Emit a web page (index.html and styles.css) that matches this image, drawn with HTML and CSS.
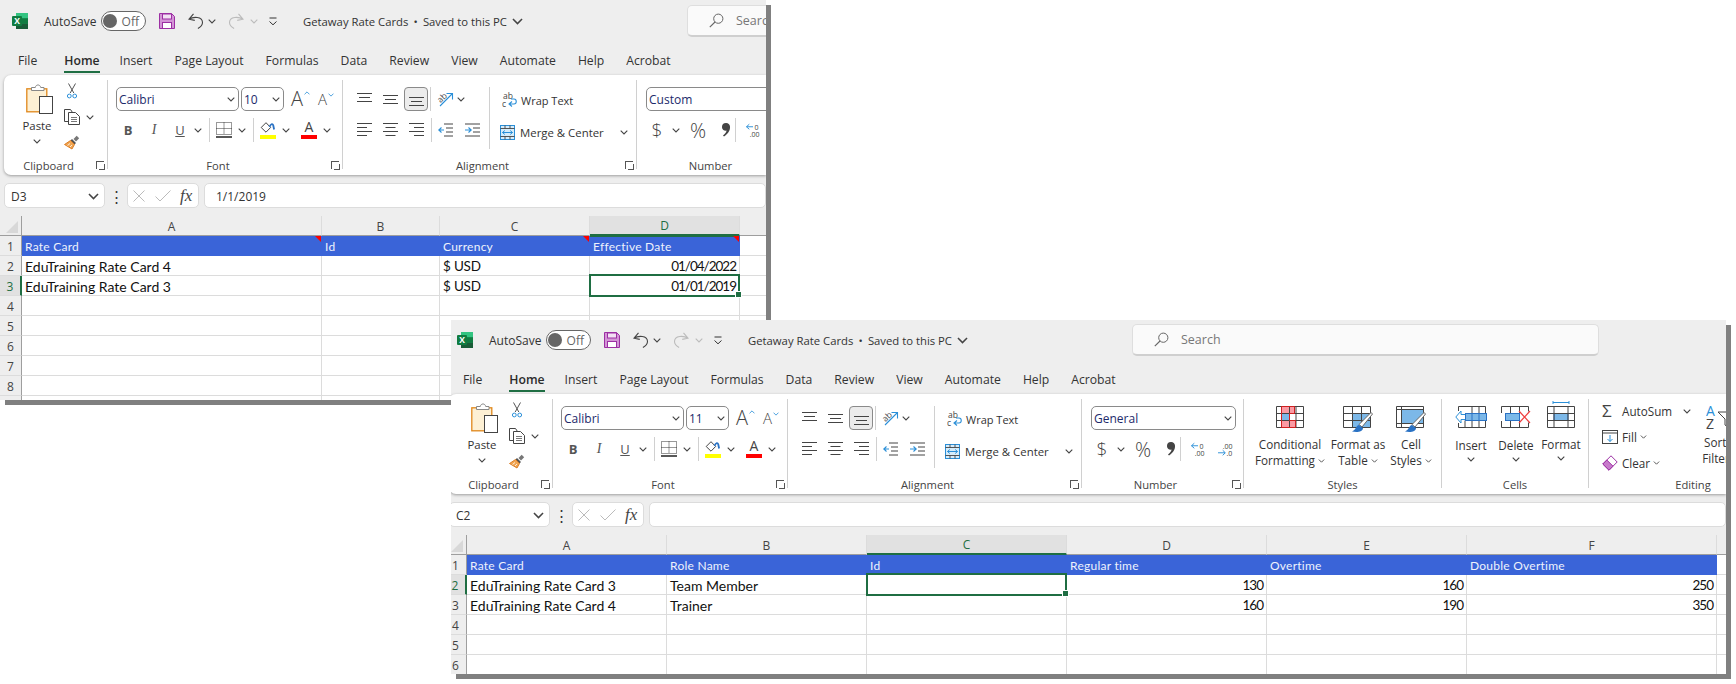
FILE: index.html
```html
<!DOCTYPE html>
<html lang="en">
<head>
  <meta charset="UTF-8" />
  <title>Getaway Rate Cards</title>
  <link rel="stylesheet" href="styles.css">
</head>
<body>

<!-- shared icons -->
<svg class="defs" aria-hidden="true">
  <symbol id="i-logo" viewBox="0 0 16 16">
    <path d="M4 0h11a1 1 0 0 1 1 1v14a1 1 0 0 1-1 1H4z" fill="#21a366"/>
    <rect x="4" y="0" width="12" height="5.3" fill="#33c481"/>
    <rect x="10" y="5.3" width="6" height="5.4" fill="#107c41"/>
    <rect x="4" y="10.7" width="12" height="5.3" fill="#185c37"/>
    <rect x="0" y="3" width="10" height="10" rx="1" fill="#107c41"/>
    <text x="5" y="11" text-anchor="middle" fill="#fff" font-size="8.5" font-weight="700" font-family="Open Sans">X</text>
  </symbol>
  <symbol id="i-save" viewBox="0 0 16 16">
    <path d="M.5.5h12l3 3v12H.5z" fill="#d394d6" stroke="#9c2fa3"/>
    <rect x="3.5" y="1" width="9" height="5" fill="#f3e0f4" stroke="#9c2fa3"/>
    <rect x="3.5" y="9.5" width="9" height="6" fill="#fff" stroke="#9c2fa3"/>
  </symbol>
  <symbol id="i-undo" viewBox="0 0 16 16">
    <path d="M5.5 .8 1 6.2l5.8 1.2M1 6.2C5 3.6 14.5 3 14.5 9.6c0 3-2.2 4.6-4.6 5.9" fill="none" stroke="currentColor" stroke-width="1.1"/>
  </symbol>
  <symbol id="i-chev" viewBox="0 0 8 5">
    <path d="M.7.7 4 4 7.3.7" fill="none" stroke="currentColor" stroke-width="1.1"/>
  </symbol>
  <symbol id="i-qat" viewBox="0 0 10 9">
    <path d="M1.5 1h7M1.5 4.5 5 7.8l3.5-3.3" fill="none" stroke="#333" stroke-width="1"/>
  </symbol>
  <symbol id="i-search" viewBox="0 0 15 15">
    <circle cx="9.3" cy="5.7" r="4.6" fill="none" stroke="#666"/>
    <path d="M6 9 .8 14.2" stroke="#666" stroke-width="1.1"/>
  </symbol>
  <symbol id="i-paste" viewBox="0 0 27 30">
    <rect x=".8" y="4.8" width="20" height="23" fill="#fdf0d4" stroke="#e0871b" stroke-width="1.3"/>
    <path d="M5.5 6.5v-3h3.8c.5-3.4 4.900-3.400 5.400 0H18v3z" fill="#fff" stroke="#888"/>
    <rect x="13.500" y="12.500" width="13" height="17" fill="#fff" stroke="#444"/>
  </symbol>
  <symbol id="i-cut" viewBox="0 0 10 16">
    <path d="M1.500.5 6.800 10M8.500.5 3.200 10" fill="none" stroke="#555"/>
    <circle cx="2.300" cy="13" r="1.900" fill="none" stroke="#2a8fd8"/>
    <circle cx="7.700" cy="13" r="1.900" fill="none" stroke="#2a8fd8"/>
  </symbol>
  <symbol id="i-copy" viewBox="0 0 16 16">
    <path d="M5 12.500H.5V.5h6l2 3" fill="none" stroke="#444"/>
    <path d="M4.500 3.500h7l4 4v8h-11z" fill="#fff" stroke="#444"/>
    <path d="M7 8.500h6M7 10.500h6M7 12.500h6" stroke="#555" stroke-width=".8"/>
  </symbol>
  <symbol id="i-painter" viewBox="0 0 16 16">
    <path d="M9.500 4 12.700.8l2.500 2.500L12 6.500z" fill="#777"/>
    <path d="M8 4 12 8l-1.500 1.500L6.500 5.500z" fill="#555"/>
    <path d="M6.500 5.500 10.500 9.500 8 14 .5 9.500z" fill="#f0a552" stroke="#d9761a" stroke-width=".9"/>
    <path d="M3.500 10.500 6 8.500M6 12l2-2" stroke="#fff" stroke-width=".8"/>
  </symbol>
  <symbol id="i-borders" viewBox="0 0 16 16">
    <path d="M.5.5h15v12H.5zM8 .5v12M.5 6.500h15" fill="none" stroke="#333" stroke-dasharray="1 1"/>
    <path d="M0 15h16" stroke="#111" stroke-width="1.400"/>
  </symbol>
  <symbol id="i-fill" viewBox="0 0 16 12">
    <path d="M6 .7 1.200 5.500 6 10.200l4.600-4.700z" fill="#fff" stroke="#444"/>
    <path d="M9.500 5c1-3 3-3.800 3.800-1.500l.8 4" fill="none" stroke="#2a72c4" stroke-width="1.800"/>
  </symbol>
  <symbol id="i-al-top" viewBox="0 0 15 15">
    <path d="M0 1.500h15M2 5.500h11M0 9.500h15" stroke="#444"/>
  </symbol>
  <symbol id="i-al-mid" viewBox="0 0 15 15">
    <path d="M0 3.500h15M2 7.500h11M0 11.500h15" stroke="#444"/>
  </symbol>
  <symbol id="i-al-bot" viewBox="0 0 15 15">
    <path d="M0 5.500h15M2 9.500h11M0 13.500h15" stroke="#444"/>
  </symbol>
  <symbol id="i-al-left" viewBox="0 0 15 15">
    <path d="M0 .5h15M0 4.500h10M0 8.500h15M0 12.500h10" stroke="#444"/>
  </symbol>
  <symbol id="i-al-center" viewBox="0 0 15 15">
    <path d="M0 .5h15M2.500 4.500h10M0 8.500h15M2.500 12.500h10" stroke="#444"/>
  </symbol>
  <symbol id="i-al-right" viewBox="0 0 15 15">
    <path d="M0 .5h15M5 4.500h10M0 8.500h15M5 12.500h10" stroke="#444"/>
  </symbol>
  <symbol id="i-orient" viewBox="0 0 18 16">
    <text x="1" y="10" font-size="8.500" font-family="Open Sans" fill="#444" transform="rotate(-45 5 8)">ab</text>
    <path d="M3 15 15 3M9.500 2.500H15.500V8.500" fill="none" stroke="#2a8fd8" stroke-width="1.100"/>
  </symbol>
  <symbol id="i-dedent" viewBox="0 0 15 15">
    <path d="M6 1h9M8 5h7M8 9h7M6 13h9" stroke="#444" fill="none"/>
    <path d="M6 7H.8M3.500 4.500.8 7l2.700 2.500" stroke="#2a8fd8" stroke-width="1.100" fill="none"/>
  </symbol>
  <symbol id="i-indent" viewBox="0 0 15 15">
    <path d="M0 1h15M8 5h7M8 9h7M0 13h15" stroke="#444" fill="none"/>
    <path d="M0 7h6M3.500 4.500 6.200 7 3.500 9.500" stroke="#2a8fd8" stroke-width="1.100" fill="none"/>
  </symbol>
  <symbol id="i-wrap" viewBox="0 0 16 16">
    <text x="1" y="7" font-size="8.500" font-family="Open Sans" fill="#444">ab</text>
    <text x="0" y="15" font-size="8.500" font-family="Open Sans" fill="#444">c</text>
    <path d="M8 12h4c3 0 3-5 0-5H9M10 9.500 7 12l3 2.500" fill="none" stroke="#2a8fd8" stroke-width="1.100"/>
  </symbol>
  <symbol id="i-merge" viewBox="0 0 15 15">
    <rect x=".5" y=".5" width="14" height="14" fill="#d6ecfa" stroke="#2a8fd8"/>
    <path d="M.5 3.500h14M.5 11.500h14M5 .5v3M10 .5v3M5 11.500v3M10 11.500v3" stroke="#444" stroke-width=".9"/>
    <path d="M2.500 7.500h10M4.800 5.500l-2.300 2 2.300 2M10.200 5.500l2.300 2-2.300 2" fill="none" stroke="#2a8fd8"/>
  </symbol>
  <symbol id="i-comma" viewBox="0 0 10 14">
    <path d="M5 0a4 4 0 0 1 4 4.500c0 4-3 7-6 9l-1-1c2-1.500 3.500-3.500 3.500-5A3.500 3.500 0 0 1 1 4a4 4 0 0 1 4-4z" fill="#444"/>
  </symbol>
  <symbol id="i-dec-more" viewBox="0 0 16 15">
    <text x="9" y="6.500" font-size="7.500" font-family="Open Sans" fill="#444">0</text>
    <text x="4" y="14" font-size="7.500" font-family="Open Sans" fill="#444">.00</text>
    <path d="M7.500 3.500h-7M3.500 .8.500 3.500l3 2.700" fill="none" stroke="#2a8fd8"/>
  </symbol>
  <symbol id="i-dec-less" viewBox="0 0 16 15">
    <text x="5" y="6.500" font-size="7.500" font-family="Open Sans" fill="#444">.00</text>
    <text x="9" y="14" font-size="7.500" font-family="Open Sans" fill="#444">.0</text>
    <path d="M0 11h7.500M5 8.300 7.800 11 5 13.700" fill="none" stroke="#2a8fd8"/>
  </symbol>
  <symbol id="i-cond" viewBox="0 0 28 22">
    <path d="M5.500.5h13v7h-13zM5.500 14.500h14v7h-14z" fill="#fb9aa3"/>
    <rect x="5.500" y="7.500" width="8" height="7" fill="#7cb8e8"/>
    <path d="M.5.5h27v21H.5zM.5 7.500h27M.5 14.500h27M5.500.5v21M13.500.5v21M20 .5v21" fill="none" stroke="#444"/>
    <path d="M5.500.5h13v7h-5v7h6v7h-14z" fill="none" stroke="#d02020"/>
  </symbol>
  <symbol id="i-astable" viewBox="0 0 30 27">
    <rect x="9.500" y="7.500" width="18" height="14" fill="#7cb8e8"/>
    <path d="M.5.5h27v21H.5zM.5 7.500h27M.5 14.500h27M9.500.5v21M18.500.5v21" fill="none" stroke="#444"/>
    <path d="M28 6.500l1.500 1.500L19 21l-3-2.500z" fill="#fff" stroke="#666"/>
    <path d="M16 19c-3 0-2 4-7 6.500 5 1 11 .5 11-3.500z" fill="#2a72c4"/>
  </symbol>
  <symbol id="i-cellst" viewBox="0 0 30 27">
    <rect x="5.500" y="3.500" width="22" height="14" fill="#7cb8e8" stroke="#2a72c4"/>
    <path d="M.5.5h27v21H.5zM.5 3.500h27M.5 17.500h27M5.500.5v21" fill="none" stroke="#444"/>
    <path d="M28 6.500l1.500 1.500L19 21l-3-2.500z" fill="#fff" stroke="#666"/>
    <path d="M16 19c-3 0-2 4-7 6.500 5 1 11 .5 11-3.500z" fill="#2a72c4"/>
  </symbol>
  <symbol id="i-insert" viewBox="0 0 32 22">
    <path d="M3.500 5V.5h27v21h-27V17M17 .5v7M24 .5v7M10 14.500v7M17 14.500v7M24 14.500v7" fill="none" stroke="#444"/>
    <rect x="10.500" y="7.500" width="21" height="7" fill="#7cb8e8" stroke="#2a72c4"/>
    <path d="M17 7.500v7M24 7.500v7" stroke="#2a72c4"/>
    <path d="M10 8.500H6V5L.8 11 6 17v-3.500h4" fill="#fff" stroke="#2a8fd8"/>
  </symbol>
  <symbol id="i-delete" viewBox="0 0 30 22">
    <path d="M.5 7V.5h27v5M.5 15v6.500h27v-5M9.500.5v7M18.500.5v7M9.500 14.500v7M18.500 14.500v7" fill="none" stroke="#444"/>
    <rect x="4.500" y="7.500" width="14" height="7" fill="#7cb8e8" stroke="#2a72c4"/>
    <path d="M18 5l11 12M29 5 18 17" stroke="#f04040" stroke-width="1.200"/>
  </symbol>
  <symbol id="i-format" viewBox="0 0 28 27">
    <path d="M6 1.500h16M6 0v3M22 0v3" stroke="#2a8fd8" fill="none"/>
    <rect x="7" y="12.500" width="14" height="7" fill="#7cb8e8" stroke="#2a72c4"/>
    <path d="M.5 5.500h27v21H.5zM.5 12.500h27M.5 19.500h27M7 5.500v21M21 5.500v21" fill="none" stroke="#444"/>
  </symbol>
  <symbol id="i-fillbox" viewBox="0 0 16 14">
    <rect x=".5" y=".5" width="15" height="13" fill="#fff" stroke="#444"/>
    <path d="M.5 3h15" stroke="#444"/>
    <path d="M8 5v6.500M5.500 9 8 11.500 10.500 9" fill="none" stroke="#2a8fd8"/>
  </symbol>
  <symbol id="i-eraser" viewBox="0 0 16 16">
    <path d="M9 .8 15.200 7 7 15.200.8 9z" fill="#fff" stroke="#9c2fa3"/>
    <path d="M4.800 5 11 11.200 7 15.200.8 9z" fill="#c77bcb" stroke="#9c2fa3"/>
  </symbol>
  <symbol id="i-sort" viewBox="0 0 30 27">
    <text x="0" y="11.500" font-size="14" font-family="Open Sans" fill="#2a8fd8">A</text>
    <text x="0" y="25" font-size="14" font-family="Open Sans" fill="#444">Z</text>
    <path d="M12 8h17l-7 7v8l-3-2v-6z" fill="#fff" stroke="#444"/>
  </symbol>
</svg>

<!-- first window: rate cards sheet -->
<div class="window win-cards">
  <div class="titlebar">
    <svg class="i-16"><use href="#i-logo"/></svg>
    <span class="autosave">AutoSave</span>
    <span class="toggle"><i class="knob"></i>Off</span>
    <svg class="i-16 qat-save"><use href="#i-save"/></svg>
    <svg class="i-16 qat-undo"><use href="#i-undo"/></svg>
    <svg class="chev qat-chev"><use href="#i-chev"/></svg>
    <svg class="i-16 qat-redo"><use href="#i-undo"/></svg>
    <svg class="chev qat-chev off"><use href="#i-chev"/></svg>
    <svg class="i-qat"><use href="#i-qat"/></svg>
    <div class="doc-title"><span>Getaway Rate Cards</span><span>•</span><span>Saved to this PC</span></div>
    <svg class="chev-lg"><use href="#i-chev"/></svg>
    <div class="search"><svg class="i-15"><use href="#i-search"/></svg><span>Search</span></div>
  </div>
  <nav class="tabs">
    <span>File</span><span class="active">Home</span><span>Insert</span><span>Page Layout</span><span>Formulas</span><span>Data</span><span>Review</span><span>View</span><span>Automate</span><span>Help</span><span>Acrobat</span>
  </nav>
  <div class="ribbon">
    <section class="group g-clip">
      <div class="body body-clip">
        <div class="paste">
          <svg class="i-paste"><use href="#i-paste"/></svg>
          <span>Paste</span>
          <svg class="chev"><use href="#i-chev"/></svg>
        </div>
        <div class="clip-tools">
          <svg class="i-cut"><use href="#i-cut"/></svg>
          <div class="rowc"><svg class="i-16"><use href="#i-copy"/></svg><svg class="chev ml-6"><use href="#i-chev"/></svg></div>
          <svg class="i-16"><use href="#i-painter"/></svg>
        </div>
      </div>
      <div class="label lbl-exp">Clipboard<i class="exp"></i></div>
    </section>
    <section class="group g-font">
      <div class="body">
        <div class="rowc">
          <div class="select sel-name">Calibri<svg class="chev"><use href="#i-chev"/></svg></div>
          <div class="select sel-size">10<svg class="chev"><use href="#i-chev"/></svg></div>
          <span class="grow">A<svg class="caret"><use href="#i-chev"/></svg></span>
          <span class="shrink">A<svg class="caret"><use href="#i-chev"/></svg></span>
        </div>
        <div class="rowc row2">
          <b class="cell bold">B</b>
          <i class="cell ital">I</i>
          <u class="cell under">U</u>
          <span class="ch12"><svg class="chev"><use href="#i-chev"/></svg></span>
          <i class="vsep ml-5"></i>
          <svg class="i-16 ml-6"><use href="#i-borders"/></svg>
          <span class="ch12 ml-4"><svg class="chev"><use href="#i-chev"/></svg></span>
          <i class="vsep ml-5"></i>
          <span class="cell swatch ml-2"><svg class="i-fill"><use href="#i-fill"/></svg><i class="bar yellow"></i></span>
          <span class="ch12"><svg class="chev"><use href="#i-chev"/></svg></span>
          <span class="cell swatch ml-5"><span class="fa">A</span><i class="bar red"></i></span>
          <span class="ch12"><svg class="chev"><use href="#i-chev"/></svg></span>
        </div>
      </div>
      <div class="label lbl-exp">Font<i class="exp"></i></div>
    </section>
    <section class="group g-align">
      <div class="body body-align">
        <div class="al-icons">
          <div class="rowc">
            <svg class="i-15"><use href="#i-al-top"/></svg>
            <svg class="i-15 ml-11"><use href="#i-al-mid"/></svg>
            <span class="pressed"><svg class="i-15"><use href="#i-al-bot"/></svg></span>
            <i class="vsep ml-2"></i>
            <svg class="i-orient ml-6"><use href="#i-orient"/></svg>
            <span class="ch12"><svg class="chev"><use href="#i-chev"/></svg></span>
          </div>
          <div class="rowc row2">
            <svg class="i-15"><use href="#i-al-left"/></svg>
            <svg class="i-15 ml-11"><use href="#i-al-center"/></svg>
            <svg class="i-15 ml-11"><use href="#i-al-right"/></svg>
            <i class="vsep ml-7"></i>
            <svg class="i-15 ml-6"><use href="#i-dedent"/></svg>
            <svg class="i-15 ml-12"><use href="#i-indent"/></svg>
          </div>
        </div>
        <div class="al-wrap">
          <div class="rowc wrap-row"><svg class="i-16"><use href="#i-wrap"/></svg><span class="ml-3">Wrap Text</span></div>
          <div class="rowc merge-row"><svg class="i-15"><use href="#i-merge"/></svg><span class="merge-text">Merge &amp; Center</span><svg class="chev"><use href="#i-chev"/></svg></div>
        </div>
      </div>
      <div class="label lbl-exp">Alignment<i class="exp"></i></div>
    </section>
    <section class="group g-number">
      <div class="body">
        <div class="rowc"><div class="select sel-num">Custom<svg class="chev"><use href="#i-chev"/></svg></div></div>
        <div class="rowc row2">
          <span class="cell dollar">$</span>
          <span class="ch12 ml-2"><svg class="chev"><use href="#i-chev"/></svg></span>
          <span class="cell pct ml-4">%</span>
          <svg class="i-comma ml-8"><use href="#i-comma"/></svg>
          <i class="vsep ml-1"></i>
          <svg class="i-15 ml-10"><use href="#i-dec-more"/></svg>
          <svg class="i-15 ml-12"><use href="#i-dec-less"/></svg>
        </div>
      </div>
      <div class="label lbl-exp">Number<i class="exp"></i></div>
    </section>
  </div>
  <div class="formula">
    <div class="namebox">D3<svg class="chev-lg"><use href="#i-chev"/></svg></div>
    <span class="dots">⋮</span>
    <div class="fxbox">
      <svg class="i-x" viewBox="0 0 12 12"><path d="M.5.500l11 11M11.500.500l-11 11" stroke="#bbb" fill="none"/></svg>
      <svg class="i-check" viewBox="0 0 16 12"><path d="M.5 6.500l4.500 4.500L15.500.500" stroke="#bbb" fill="none"/></svg>
      <em class="fx">fx</em>
    </div>
    <div class="fbar">1/1/2019</div>
  </div>
  <table class="sheet">
    <colgroup><col class="c-row"><col class="c-300"><col class="c-118"><col class="c-150"><col class="c-150"><col></colgroup>
    <thead>
      <tr><th class="corner"></th><th>A</th><th>B</th><th>C</th><th class="on">D</th><th class="rest"></th></tr>
    </thead>
    <tbody>
      <tr class="hdr"><th>1</th><td class="note">Rate Card</td><td>Id</td><td class="note">Currency</td><td class="note on-top">Effective Date</td><td class="blank"></td></tr>
      <tr><th>2</th><td>EduTraining Rate Card 4</td><td></td><td class="cur">$ USD</td><td class="num">01/04/2022</td><td class="blank"></td></tr>
      <tr><th class="on">3</th><td>EduTraining Rate Card 3</td><td></td><td class="cur">$ USD</td><td class="num current">01/01/2019</td><td class="blank"></td></tr>
      <tr><th>4</th><td></td><td></td><td></td><td></td><td class="blank"></td></tr>
      <tr><th>5</th><td></td><td></td><td></td><td></td><td class="blank"></td></tr>
      <tr><th>6</th><td></td><td></td><td></td><td></td><td class="blank"></td></tr>
      <tr><th>7</th><td></td><td></td><td></td><td></td><td class="blank"></td></tr>
      <tr><th>8</th><td></td><td></td><td></td><td></td><td class="blank"></td></tr>
      <tr><th></th><td></td><td></td><td></td><td></td><td class="blank"></td></tr>
    </tbody>
  </table>
</div>

<!-- second window: roles sheet -->
<div class="window win-roles">
  <div class="shift">
    <div class="titlebar">
      <svg class="i-16"><use href="#i-logo"/></svg>
      <span class="autosave">AutoSave</span>
      <span class="toggle"><i class="knob"></i>Off</span>
      <svg class="i-16 qat-save"><use href="#i-save"/></svg>
      <svg class="i-16 qat-undo"><use href="#i-undo"/></svg>
      <svg class="chev qat-chev"><use href="#i-chev"/></svg>
      <svg class="i-16 qat-redo"><use href="#i-undo"/></svg>
      <svg class="chev qat-chev off"><use href="#i-chev"/></svg>
      <svg class="i-qat"><use href="#i-qat"/></svg>
      <div class="doc-title"><span>Getaway Rate Cards</span><span>•</span><span>Saved to this PC</span></div>
      <svg class="chev-lg"><use href="#i-chev"/></svg>
      <div class="search"><svg class="i-15"><use href="#i-search"/></svg><span>Search</span></div>
    </div>
    <nav class="tabs">
      <span>File</span><span class="active">Home</span><span>Insert</span><span>Page Layout</span><span>Formulas</span><span>Data</span><span>Review</span><span>View</span><span>Automate</span><span>Help</span><span>Acrobat</span>
    </nav>
    <div class="ribbon">
      <section class="group g-clip">
        <div class="body body-clip">
          <div class="paste">
            <svg class="i-paste"><use href="#i-paste"/></svg>
            <span>Paste</span>
            <svg class="chev"><use href="#i-chev"/></svg>
          </div>
          <div class="clip-tools">
            <svg class="i-cut"><use href="#i-cut"/></svg>
            <div class="rowc"><svg class="i-16"><use href="#i-copy"/></svg><svg class="chev ml-6"><use href="#i-chev"/></svg></div>
            <svg class="i-16"><use href="#i-painter"/></svg>
          </div>
        </div>
        <div class="label lbl-exp">Clipboard<i class="exp"></i></div>
      </section>
      <section class="group g-font">
        <div class="body">
          <div class="rowc">
            <div class="select sel-name">Calibri<svg class="chev"><use href="#i-chev"/></svg></div>
            <div class="select sel-size">11<svg class="chev"><use href="#i-chev"/></svg></div>
            <span class="grow">A<svg class="caret"><use href="#i-chev"/></svg></span>
            <span class="shrink">A<svg class="caret"><use href="#i-chev"/></svg></span>
          </div>
          <div class="rowc row2">
            <b class="cell bold">B</b>
            <i class="cell ital">I</i>
            <u class="cell under">U</u>
            <span class="ch12"><svg class="chev"><use href="#i-chev"/></svg></span>
            <i class="vsep ml-5"></i>
            <svg class="i-16 ml-6"><use href="#i-borders"/></svg>
            <span class="ch12 ml-4"><svg class="chev"><use href="#i-chev"/></svg></span>
            <i class="vsep ml-5"></i>
            <span class="cell swatch ml-2"><svg class="i-fill"><use href="#i-fill"/></svg><i class="bar yellow"></i></span>
            <span class="ch12"><svg class="chev"><use href="#i-chev"/></svg></span>
            <span class="cell swatch ml-5"><span class="fa">A</span><i class="bar red"></i></span>
            <span class="ch12"><svg class="chev"><use href="#i-chev"/></svg></span>
          </div>
        </div>
        <div class="label lbl-exp">Font<i class="exp"></i></div>
      </section>
      <section class="group g-align">
        <div class="body body-align">
          <div class="al-icons">
            <div class="rowc">
              <svg class="i-15"><use href="#i-al-top"/></svg>
              <svg class="i-15 ml-11"><use href="#i-al-mid"/></svg>
              <span class="pressed"><svg class="i-15"><use href="#i-al-bot"/></svg></span>
              <i class="vsep ml-2"></i>
              <svg class="i-orient ml-6"><use href="#i-orient"/></svg>
              <span class="ch12"><svg class="chev"><use href="#i-chev"/></svg></span>
            </div>
            <div class="rowc row2">
              <svg class="i-15"><use href="#i-al-left"/></svg>
              <svg class="i-15 ml-11"><use href="#i-al-center"/></svg>
              <svg class="i-15 ml-11"><use href="#i-al-right"/></svg>
              <i class="vsep ml-7"></i>
              <svg class="i-15 ml-6"><use href="#i-dedent"/></svg>
              <svg class="i-15 ml-12"><use href="#i-indent"/></svg>
            </div>
          </div>
          <div class="al-wrap">
            <div class="rowc wrap-row"><svg class="i-16"><use href="#i-wrap"/></svg><span class="ml-3">Wrap Text</span></div>
            <div class="rowc merge-row"><svg class="i-15"><use href="#i-merge"/></svg><span class="merge-text">Merge &amp; Center</span><svg class="chev"><use href="#i-chev"/></svg></div>
          </div>
        </div>
        <div class="label lbl-exp">Alignment<i class="exp"></i></div>
      </section>
      <section class="group g-number">
        <div class="body">
          <div class="rowc"><div class="select sel-num">General<svg class="chev"><use href="#i-chev"/></svg></div></div>
          <div class="rowc row2">
            <span class="cell dollar">$</span>
            <span class="ch12 ml-2"><svg class="chev"><use href="#i-chev"/></svg></span>
            <span class="cell pct ml-4">%</span>
            <svg class="i-comma ml-8"><use href="#i-comma"/></svg>
            <i class="vsep ml-1"></i>
            <svg class="i-15 ml-10"><use href="#i-dec-more"/></svg>
            <svg class="i-15 ml-12"><use href="#i-dec-less"/></svg>
          </div>
        </div>
        <div class="label lbl-exp">Number<i class="exp"></i></div>
      </section>
      <section class="group g-styles">
        <div class="body body-big">
          <div class="big big-64">
            <svg class="i-cond"><use href="#i-cond"/></svg>
            <span>Conditional</span>
            <span>Formatting <svg class="chev-sm"><use href="#i-chev"/></svg></span>
          </div>
          <div class="big big-64">
            <svg class="i-styl"><use href="#i-astable"/></svg>
            <span>Format as</span>
            <span>Table <svg class="chev-sm"><use href="#i-chev"/></svg></span>
          </div>
          <div class="big big-42">
            <svg class="i-styl"><use href="#i-cellst"/></svg>
            <span>Cell</span>
            <span>Styles <svg class="chev-sm"><use href="#i-chev"/></svg></span>
          </div>
        </div>
        <div class="label">Styles</div>
      </section>
      <section class="group g-cells">
        <div class="body body-cells">
          <div class="big big-44">
            <svg class="i-ins"><use href="#i-insert"/></svg>
            <span>Insert</span>
            <svg class="chev"><use href="#i-chev"/></svg>
          </div>
          <div class="big big-44">
            <svg class="i-del"><use href="#i-delete"/></svg>
            <span>Delete</span>
            <svg class="chev"><use href="#i-chev"/></svg>
          </div>
          <div class="big big-44 big-format">
            <svg class="i-fmt"><use href="#i-format"/></svg>
            <span>Format</span>
            <svg class="chev"><use href="#i-chev"/></svg>
          </div>
        </div>
        <div class="label">Cells</div>
      </section>
      <section class="group g-edit">
        <div class="body body-edit">
          <div class="edit-rows">
            <div class="rowc edit-row"><span class="sigma">Σ</span><span class="edit-text">AutoSum</span><svg class="chev ml-10"><use href="#i-chev"/></svg></div>
            <div class="rowc edit-row"><svg class="i-16"><use href="#i-fillbox"/></svg><span class="edit-text">Fill</span><svg class="chev-sm ml-3"><use href="#i-chev"/></svg></div>
            <div class="rowc edit-row"><svg class="i-16"><use href="#i-eraser"/></svg><span class="edit-text">Clear</span><svg class="chev-sm ml-3"><use href="#i-chev"/></svg></div>
          </div>
          <div class="big big-52">
            <svg class="i-styl"><use href="#i-sort"/></svg>
            <span>Sort &amp;</span>
            <span>Filter <svg class="chev-sm"><use href="#i-chev"/></svg></span>
          </div>
        </div>
        <div class="label">Editing</div>
      </section>
    </div>
    <div class="formula">
      <div class="namebox">C2<svg class="chev-lg"><use href="#i-chev"/></svg></div>
      <span class="dots">⋮</span>
      <div class="fxbox">
        <svg class="i-x" viewBox="0 0 12 12"><path d="M.5.500l11 11M11.500.500l-11 11" stroke="#bbb" fill="none"/></svg>
        <svg class="i-check" viewBox="0 0 16 12"><path d="M.5 6.500l4.500 4.500L15.500.500" stroke="#bbb" fill="none"/></svg>
        <em class="fx">fx</em>
      </div>
      <div class="fbar"></div>
    </div>
    <table class="sheet">
      <colgroup><col class="c-row"><col class="c-200"><col class="c-200"><col class="c-200"><col class="c-200"><col class="c-200"><col class="c-250"><col></colgroup>
      <thead>
        <tr><th class="corner"></th><th>A</th><th>B</th><th class="on">C</th><th>D</th><th>E</th><th>F</th><th class="rest"></th></tr>
      </thead>
      <tbody>
        <tr class="hdr"><th>1</th><td>Rate Card</td><td>Role Name</td><td>Id</td><td>Regular time</td><td>Overtime</td><td>Double Overtime</td><td class="blank"></td></tr>
        <tr><th class="on">2</th><td>EduTraining Rate Card 3</td><td>Team Member</td><td class="current"></td><td class="num">130</td><td class="num">160</td><td class="num">250</td><td class="blank"></td></tr>
        <tr><th>3</th><td>EduTraining Rate Card 4</td><td>Trainer</td><td></td><td class="num">160</td><td class="num">190</td><td class="num">350</td><td class="blank"></td></tr>
        <tr><th>4</th><td></td><td></td><td></td><td></td><td></td><td></td><td class="blank"></td></tr>
        <tr><th>5</th><td></td><td></td><td></td><td></td><td></td><td></td><td class="blank"></td></tr>
        <tr><th>6</th><td></td><td></td><td></td><td></td><td></td><td></td><td class="blank"></td></tr>
      </tbody>
    </table>
  </div>
</div>

</body>
</html>
```

FILE: styles.css
```css
* { box-sizing: border-box; }
body { margin: 0; background: #fff; font-family: "Open Sans", sans-serif; color: #333; }
.defs { display: none; }

/* windows sit freely on the desktop */
.window {
  position: absolute;
  background: #eeeeee;
  overflow: hidden;
  box-shadow: 5px 5px 0 #808080;
}
.win-cards { left: 0; top: 0; width: 766px; height: 400px; }
.win-roles { left: 451px; top: 320px; width: 1275px; height: 354px; }
.shift { margin: -1px 0 0 -6px; width: 1281px; }

svg { display: block; flex: none; }
.i-16 { width: 16px; height: 16px; }
.i-15 { width: 15px; height: 15px; }
.chev { width: 8px; height: 5px; color: #444; }
.chev-lg { width: 11px; height: 7px; color: #444; }
.chev-sm { display: inline-block; width: 7px; height: 4px; color: #444; vertical-align: 2px; }
.ml-1 { margin-left: 1px; }
.ml-2 { margin-left: 2px; }
.ml-3 { margin-left: 3px; }
.ml-4 { margin-left: 4px; }
.ml-5 { margin-left: 5px; }
.ml-6 { margin-left: 6px; }
.ml-7 { margin-left: 7px; }
.ml-8 { margin-left: 8px; }
.ml-10 { margin-left: 10px; }
.ml-11 { margin-left: 11px; }
.ml-12 { margin-left: 12px; }

/* title bar */
.titlebar { display: flex; align-items: center; height: 42px; padding-left: 12px; font-size: 12px; }
.titlebar > * { flex: none; }
.autosave { margin-left: 16px; width: 50px; white-space: nowrap; }
.toggle {
  display: flex; align-items: center; justify-content: flex-end;
  position: relative;
  margin-left: 7px; width: 45px; height: 20px; padding-right: 6px;
  border: 1px solid #666; border-radius: 10px;
  background: #fff; color: #666; font-size: 12px;
}
.knob { position: absolute; left: 1px; top: 2px; width: 14px; height: 14px; border-radius: 50%; background: #666; }
.qat-save { margin-left: 13px; }
.qat-undo { margin-left: 13px; color: #444; }
.qat-chev { margin-left: 4px; }
.qat-chev.off { color: #bbb; margin-left: 6px; }
.qat-redo { margin-left: 12px; color: #bbb; transform: scaleX(-1); }
.i-qat { width: 10px; height: 9px; margin-left: 10px; }
.doc-title { display: flex; justify-content: space-between; margin-left: 25px; width: 204px; white-space: nowrap; font-size: 11.3px; }
.doc-title + .chev-lg { margin-left: 5px; }
.search {
  display: flex; align-items: center;
  margin-left: 164px; width: 467px; height: 32px; padding-left: 21px;
  background: #fafafa; border: 1px solid #dedede; border-bottom: 2px solid #cfcfcf; border-radius: 5px;
  color: #777; font-size: 12.5px;
}
.search span { margin-left: 12px; }

/* tabs */
.tabs { display: flex; gap: 22px; height: 33px; padding: 10px 0 0 18px; font-size: 12.2px; }
.tabs span { position: relative; line-height: 18px; }
.tabs .active { margin: 0 -2px 0 5px; font-weight: 600; color: #2b2b2b; }
.tabs .active::after { content: ""; position: absolute; left: 0; right: 0; top: 19px; height: 2px; background: #1f6e43; }

/* ribbon */
.ribbon {
  display: flex;
  height: 100px; margin-left: 4px; padding-top: 5px;
  background: #fff;
  border-radius: 7px 0 0 7px;
  box-shadow: 0 1px 3px rgba(0,0,0,0.35);
}
.group { flex: none; height: 89px; border-right: 1px solid #d0d0d0; }
.g-clip { width: 104px; }
.g-font { width: 235px; padding-left: 8px; }
.g-align { width: 294px; padding-left: 14px; }
.g-number { width: 162px; padding-left: 9px; }
.g-styles { width: 198px; }
.g-cells { width: 147px; }
.g-edit { width: 208px; border-right: none; }
.body { height: 77px; padding-top: 7px; }
.label { position: relative; height: 16px; padding-top: 1px; line-height: 16px; text-align: center; font-size: 11.2px; color: #444; }
.lbl-exp { padding-right: 14px; }
.g-font .label { margin-left: -8px; }
.g-align .label { margin-left: -14px; }
.g-number .label { margin-left: -9px; }
.exp { position: absolute; right: 3px; top: 4px; width: 8px; height: 8px; border-left: 1px solid #555; border-top: 1px solid #555; }
.exp::after { content: ""; position: absolute; right: -1px; bottom: -1px; width: 5px; height: 5px; border-right: 1px solid #555; border-bottom: 1px solid #555; }
.rowc { display: flex; align-items: center; height: 24px; }
.row2 { margin-top: 7px; }
.vsep { flex: none; width: 1px; height: 24px; background: #d0d0d0; }
.cell { flex: none; display: flex; align-items: center; justify-content: center; width: 24px; height: 24px; font-style: normal; text-decoration: none; }
.ch12 { flex: none; display: flex; align-items: center; justify-content: center; width: 12px; height: 24px; }

/* clipboard */
.body-clip { display: flex; padding: 4px 0 0 16px; }
.paste { display: flex; flex-direction: column; align-items: center; width: 34px; font-size: 11.4px; }
.paste .i-paste { width: 27px; height: 30px; margin-left: 5px; }
.paste span { line-height: 16px; margin-top: 4px; }
.paste .chev { margin-top: 5px; }
.clip-tools { display: flex; flex-direction: column; margin: -1px 0 0 10px; }
.i-cut { width: 10px; height: 16px; margin-left: 3px; }
.clip-tools .rowc { height: 16px; margin: 10px 0; }

/* font */
.select {
  display: flex; align-items: center; justify-content: space-between;
  height: 24px; padding: 0 3px 0 2px; flex: none;
  border: 1px solid #8a8a8a; border-radius: 5px;
  font-size: 12px; color: #1c2a6b;
}
.sel-name { width: 123px; }
.sel-size { width: 43px; margin-left: 2px; }
.sel-num { width: 145px; }
.grow, .shrink { position: relative; flex: none; color: #444; line-height: 24px; font-weight: 300; }
.grow { margin-left: 7px; width: 20px; font-size: 20px; }
.shrink { margin-left: 7px; width: 20px; font-size: 15px; }
.caret { position: absolute; width: 6px; height: 4px; color: #2a8fd8; transform: scaleY(-1); }
.grow .caret { left: 13px; top: 4px; }
.shrink .caret { left: 10px; top: 6px; transform: none; }
.bold { font-weight: 700; font-size: 13px; color: #555; }
.ital { margin-left: 2px; font-family: "Liberation Serif", serif; font-style: italic; font-size: 14px; color: #555; }
.under { margin-left: 2px; font-size: 13px; text-decoration: underline; color: #555; }
.swatch { position: relative; display: block; }
.i-fill { position: absolute; left: 4px; top: 4px; width: 16px; height: 12px; }
.fa { position: absolute; left: 0; right: 0; top: 1px; text-align: center; font-size: 14px; line-height: 16px; color: #444; }
.bar { position: absolute; left: 4px; top: 17px; width: 16px; height: 4px; }
.yellow { background: #ffff00; }
.red { background: #ff0000; }

/* alignment */
.body-align { display: flex; }
.al-icons { width: 133px; height: 62px; border-right: 1px solid #d0d0d0; }
.pressed { flex: none; display: flex; align-items: center; justify-content: center; margin-left: 6px; width: 24px; height: 24px; background: #ececec; border: 1px solid #8a8a8a; border-radius: 4px; }
.i-orient { width: 18px; height: 16px; }
.al-wrap { font-size: 11.4px; }
.wrap-row { margin: 1px 0 0 12px; font-size: 11px; }
.merge-row { margin: 8px 0 0 10px; }
.merge-text { width: 100px; margin-left: 5px; white-space: nowrap; }

/* number */
.dollar { width: 22px; font-size: 19px; font-weight: 300; color: #444; }
.pct { font-size: 20px; font-weight: 300; color: #444; }
.i-comma { width: 10px; height: 14px; margin-right: 3px; }
.i-comma.ml-8 { margin-left: 11px; }

/* styles, cells, editing: big stacked buttons */
.body-big { display: flex; padding-left: 14px; }
.body-cells { display: flex; padding-left: 7px; }
.big { display: flex; flex-direction: column; align-items: center; flex: none; font-size: 11.7px; white-space: nowrap; }
.big span { line-height: 16px; }
.big-64 { width: 64px; }
.big-42 { width: 42px; }
.big-44 { width: 44px; }
.big-52 { width: 52px; }
.big-64 + .big-64 { margin-left: 4px; }
.big-44 + .big-44 { margin-left: 1px; }
.i-cond { width: 28px; height: 22px; margin-bottom: 8px; }
.i-styl { width: 30px; height: 27px; margin-bottom: 3px; }
.i-ins { width: 32px; height: 22px; margin-bottom: 9px; }
.i-del { width: 30px; height: 22px; margin-bottom: 9px; }
.i-fmt { width: 28px; height: 27px; margin: -5px 0 8px; }
.big .chev { margin-top: 4px; }
.body-edit { display: flex; padding: 5px 0 0 13px; }
.edit-rows { width: 93px; font-size: 11.7px; margin-top: -6px; }
.edit-row { height: 26px; }
.sigma { width: 16px; font-size: 17px; color: #444; line-height: 20px; }
.edit-text { margin-left: 4px; }
.edit-row .ml-10 { margin-left: 11px; }

/* formula bar */
.formula { display: flex; align-items: center; height: 25px; margin: 8px 0; padding-left: 4px; font-size: 12px; }
.namebox, .fxbox, .fbar { height: 25px; background: #fff; border: 1px solid #dcdcdc; border-radius: 5px; }
.namebox { display: flex; align-items: center; justify-content: space-between; width: 101px; padding: 1px 5px 0 6px; flex: none; }
.dots { width: 22px; text-align: center; font-size: 15px; flex: none; }
.fxbox { display: flex; align-items: center; width: 72px; flex: none; padding-left: 5px; }
.i-x { width: 12px; height: 12px; }
.i-check { width: 16px; height: 12px; margin-left: 10px; }
.fx { margin-left: 9px; font-family: "Liberation Serif", serif; font-size: 17px; color: #444; }
.fbar { flex: 1; margin-left: 5px; padding-left: 11px; line-height: 25px; }

/* sheet */
.sheet {
  table-layout: fixed; width: 100%;
  border-collapse: separate; border-spacing: 0;
  background: #fff;
  font-family: Lato, sans-serif; font-size: 14px; color: #111;
}
.c-row { width: 22px; }
.c-300 { width: 300px; }
.c-118 { width: 118px; }
.c-150 { width: 150px; }
.c-200 { width: 200px; }
.c-250 { width: 250px; }
.sheet thead th {
  height: 20px; padding: 1px 0 0;
  background: #eeeeee;
  border-right: 1px solid #dcdcdc; border-bottom: 1px solid #9e9e9e;
  font-family: "Open Sans", sans-serif; font-weight: 400; font-size: 12px; color: #444;
}
.sheet thead th.corner { position: relative; border-right-color: #9e9e9e; }
.corner::after { content: ""; position: absolute; right: 3px; bottom: 2px; border-left: 12px solid transparent; border-bottom: 12px solid #d8d8d8; }
.sheet thead th.on { background: #e1e1e1; border-bottom: 2px solid #1f6e43; color: #1f6e43; }
.sheet thead th.rest { border-right: none; }
.sheet tbody th {
  height: 20px; padding: 1px 0 0;
  background: #eeeeee;
  border-right: 1px solid #9e9e9e; border-bottom: 1px solid #dcdcdc;
  font-family: "Open Sans", sans-serif; font-weight: 400; font-size: 12px; color: #444;
}
.sheet tbody th.on { background: #e1e1e1; border-right: 2px solid #1f6e43; color: #1f6e43; }
.sheet td {
  height: 20px; padding: 1px 3px 0;
  border-right: 1px solid #dcdcdc; border-bottom: 1px solid #dcdcdc;
  white-space: nowrap; overflow: visible;
}
.sheet td.blank { border-right: none; padding: 0; }
.sheet td.num { text-align: right; font-size: 13.5px; letter-spacing: -1px; }
.sheet td.cur { font-size: 13.5px; letter-spacing: -.2px; }
.hdr td { padding-top: 2px; background: #3a64d8; border-color: #3a64d8; color: #eef2fc; font-size: 12px; letter-spacing: .25px; position: relative; }
.hdr td.blank { background: #fff; border-bottom-color: #dcdcdc; }
.hdr .note::after { content: ""; position: absolute; right: 0; top: 0; border-left: 6px solid transparent; border-top: 6px solid #ff0000; }
.hdr .on-top { box-shadow: inset 0 1px 0 #1f6e43; }
.current { position: relative; }
.current::before { content: ""; position: absolute; left: -1px; top: -2px; right: -1px; bottom: -2px; border: 2px solid #1f6e43; }
.current::after { content: ""; position: absolute; right: -3px; bottom: -3px; width: 5px; height: 5px; background: #1f6e43; border: 1px solid #fff; box-sizing: content-box; }
```
